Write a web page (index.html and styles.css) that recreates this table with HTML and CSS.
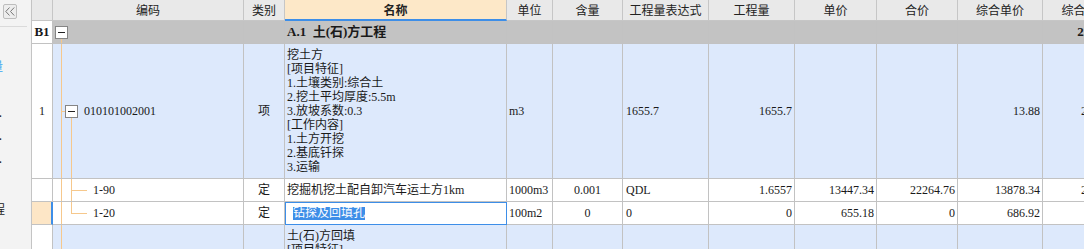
FILE: index.html
```html
<!DOCTYPE html>
<html lang="zh-CN">
<head>
<meta charset="utf-8">
<title>分部分项</title>
<link rel="stylesheet" href="styles.css">
</head>
<body>
<aside class="sidebar">
  <div class="collapse">
    <svg width="10" height="9" viewBox="0 0 10 9"><polyline points="4.5,0.5 0.8,4.5 4.5,8.5" fill="none" stroke="#777" stroke-width="1"/><polyline points="9.2,0.5 5.5,4.5 9.2,8.5" fill="none" stroke="#777" stroke-width="1"/></svg>
  </div>
  <div class="sidebar-rule"></div>
  <nav class="nav">
    <div class="nav-item peek2 active"><span>分部分项工程量</span></div>
    <div class="nav-item peek2"><span> </span></div>
    <div class="nav-item peek1"><span>措施项目.</span></div>
    <div class="nav-item peek1"><span>其他项目.</span></div>
    <div class="nav-item peek1"><span>规费税金.</span></div>
    <div class="nav-item peek5 gap"><span>单位工程</span></div>
  </nav>
</aside>

<main class="grid">
  <div class="row head">
    <div class="c"></div>
    <div class="c">编码</div>
    <div class="c">类别</div>
    <div class="c hot">名称</div>
    <div class="c">单位</div>
    <div class="c">含量</div>
    <div class="c">工程量表达式</div>
    <div class="c">工程量</div>
    <div class="c">单价</div>
    <div class="c">合价</div>
    <div class="c">综合单价</div>
    <div class="c">综合合价</div>
  </div>

  <div class="row part">
    <div class="c rh strong">B1</div>
    <div class="c code tree-part"><span class="tbox"></span></div>
    <div class="c"></div>
    <div class="c title">A.1&nbsp;&nbsp;土(石)方工程</div>
    <div class="c"></div>
    <div class="c"></div>
    <div class="c"></div>
    <div class="c"></div>
    <div class="c"></div>
    <div class="c"></div>
    <div class="c"></div>
    <div class="c r title">22981.12</div>
  </div>

  <div class="row item">
    <div class="c rh">1</div>
    <div class="c code tree-item"><span class="tbox"></span><span class="code-text">010101002001</span></div>
    <div class="c m">项</div>
    <div class="c lines">
      <div>挖土方</div>
      <div>[项目特征]</div>
      <div>1.土壤类别:综合土</div>
      <div>2.挖土平均厚度:5.5m</div>
      <div>3.放坡系数:0.3</div>
      <div>[工作内容]</div>
      <div>1.土方开挖</div>
      <div>2.基底钎探</div>
      <div>3.运输</div>
    </div>
    <div class="c">m3</div>
    <div class="c"></div>
    <div class="c pl">1655.7</div>
    <div class="c r">1655.7</div>
    <div class="c"></div>
    <div class="c"></div>
    <div class="c r">13.88</div>
    <div class="c r">22981.12</div>
  </div>

  <div class="row sub">
    <div class="c rh"></div>
    <div class="c code tree-mid">1-90</div>
    <div class="c m">定</div>
    <div class="c">挖掘机挖土配自卸汽车运土方1km</div>
    <div class="c">1000m3</div>
    <div class="c m">0.001</div>
    <div class="c pl">QDL</div>
    <div class="c r">1.6557</div>
    <div class="c r">13447.34</div>
    <div class="c r">22264.76</div>
    <div class="c r">13878.34</div>
    <div class="c r">22978.47</div>
  </div>

  <div class="row sub">
    <div class="c rh cur"></div>
    <div class="c code tree-end">1-20</div>
    <div class="c m">定</div>
    <div class="c sel"><span class="hl">钻探及回填孔</span></div>
    <div class="c">100m2</div>
    <div class="c m">0</div>
    <div class="c pl">0</div>
    <div class="c r">0</div>
    <div class="c r">655.18</div>
    <div class="c r">0</div>
    <div class="c r">686.92</div>
    <div class="c r">0</div>
  </div>

  <div class="row item last">
    <div class="c rh">2</div>
    <div class="c code tree-line">010103001001</div>
    <div class="c m">项</div>
    <div class="c lines">
      <div>土(石)方回填</div>
      <div>[项目特征]</div>
      <div>1.填方材料品种:素土</div>
      <div>2.密实度要求:满足设计</div>
      <div>[工作内容]</div>
      <div>1.运输</div>
      <div>2.回填</div>
      <div>3.压实</div>
    </div>
    <div class="c">m3</div>
    <div class="c"></div>
    <div class="c pl">820.5</div>
    <div class="c r">820.5</div>
    <div class="c"></div>
    <div class="c"></div>
    <div class="c r">11.36</div>
    <div class="c r">9320.88</div>
  </div>
</main>
</body>
</html>
```

FILE: styles.css
```css
* { box-sizing: border-box; }

html, body { margin: 0; padding: 0; }

body {
  width: 1084px;
  height: 249px;
  overflow: hidden;
  display: flex;
  align-items: flex-start;
  background: #ffffff;
  color: #1a1a1a;
  font-family: "Liberation Serif", "Noto Sans CJK SC", serif;
  font-size: 12px;
}

/* ---------- sidebar ---------- */
.sidebar {
  flex: none;
  width: 32px;
  height: 249px;
  background: #f3f3f3;
  border-right: 1px solid #c4c4c4;
  overflow: hidden;
  display: flex;
  flex-direction: column;
}

.collapse {
  margin: 4px 0 0 3px;
  width: 14px;
  height: 15px;
  border: 1px solid #bdbdbd;
  border-radius: 2px;
  background: #ededed;
  display: flex;
  align-items: center;
  justify-content: center;
}

.sidebar-rule {
  margin-top: 7px;
  width: 27px;
  height: 1px;
  background: #dadada;
}

.nav {
  padding-top: 27px;
  display: flex;
  flex-direction: column;
}

.nav-item {
  height: 23px;
  line-height: 23px;
  display: flex;
  justify-content: flex-end;
  white-space: nowrap;
  font-family: "Noto Sans CJK SC", sans-serif;
  font-size: 12px;
  color: #222;
}

.nav-item.peek1 { width: 2px; }
.nav-item.peek2 { width: 3px; }
.nav-item.peek5 { width: 5px; }
.nav-item.active { color: #3aa6f2; }
.nav-item.gap { margin-top: 28px; }

/* ---------- grid ---------- */
.grid {
  flex: none;
  width: 1097px;
  display: flex;
  flex-direction: column;
}

.row {
  display: grid;
  grid-template-columns: 21px 191px 41px 222px 46px 70px 86px 86px 82px 81px 85px 86px;
  height: 23px;
}

.c {
  border-right: 1px solid #c2c2c2;
  border-bottom: 1px solid #c2c2c2;
  display: flex;
  align-items: center;
  padding: 0 2px;
  white-space: nowrap;
  overflow: hidden;
  line-height: 14px;
}

.c.r { justify-content: flex-end; }
.c.m { justify-content: center; }
.c.pl { padding-left: 3px; }

/* header */
.row.head { height: 21px; }
.head .c {
  background: #e9e9e9;
  justify-content: center;
  font-family: "Noto Sans CJK SC", sans-serif;
  color: #222;
  border-color: #c6c6c6;
}
.head .c.hot {
  background: #fde8c8;
  font-weight: bold;
  border-bottom: 2px solid #3d8ee8;
}

/* row header column */
.rh {
  background: #ffffff;
  justify-content: center;
  padding: 0;
}
.rh.strong { font-weight: bold; font-size: 13px; }
.rh.cur {
  background: #fde6c6;
  border-right: 2px solid #3d8ee8;
}

/* row kinds */
.row.part { background: #c3c3c3; }
.row.item { background: #dde9fc; height: auto; }
.row.sub { background: #ffffff; }
.row.last { height: auto; }

.title { font-weight: bold; font-size: 13px; }

.lines {
  flex-direction: column;
  align-items: flex-start;
  justify-content: flex-start;
  padding: 4px 2px;
}

/* selected editing cell */
.sel {
  background: #ffffff;
  outline: 1px solid #3d8ee8;
  outline-offset: -1px;
  padding-left: 8px;
}
.hl {
  background: #3d8ee8;
  color: #ffffff;
  line-height: 13px;
}

/* ---------- tree ---------- */
.code { --tl: #f6c88c; background-repeat: no-repeat; }

.tbox {
  flex: none;
  width: 13px;
  height: 13px;
  border: 1px solid #858585;
  background: #ffffff;
  display: flex;
  align-items: center;
  justify-content: center;
}
.tbox::before {
  content: "";
  width: 7px;
  height: 1px;
  background: #222;
}

.tree-part {
  padding-left: 2px;
  background-image: linear-gradient(var(--tl), var(--tl));
  background-position: 8px 100%;
  background-size: 1px 50%;
}

.tree-item {
  padding-left: 12px;
  background-image:
    linear-gradient(var(--tl), var(--tl)),
    linear-gradient(var(--tl), var(--tl)),
    linear-gradient(var(--tl), var(--tl));
  background-position: 8px 0, 8px 50%, 18px 100%;
  background-size: 1px 100%, 4px 1px, 1px 50%;
}
.code-text { margin-left: 6px; }

.tree-mid {
  padding-left: 40px;
  background-image:
    linear-gradient(var(--tl), var(--tl)),
    linear-gradient(var(--tl), var(--tl)),
    linear-gradient(var(--tl), var(--tl));
  background-position: 8px 0, 18px 0, 18px 50%;
  background-size: 1px 100%, 1px 100%, 16px 1px;
}

.tree-end {
  padding-left: 40px;
  background-image:
    linear-gradient(var(--tl), var(--tl)),
    linear-gradient(var(--tl), var(--tl)),
    linear-gradient(var(--tl), var(--tl));
  background-position: 8px 0, 18px 0, 18px 50%;
  background-size: 1px 100%, 1px 50%, 16px 1px;
}

.tree-line {
  padding-left: 26px;
  background-image: linear-gradient(var(--tl), var(--tl));
  background-position: 8px 0;
  background-size: 1px 100%;
}
```
